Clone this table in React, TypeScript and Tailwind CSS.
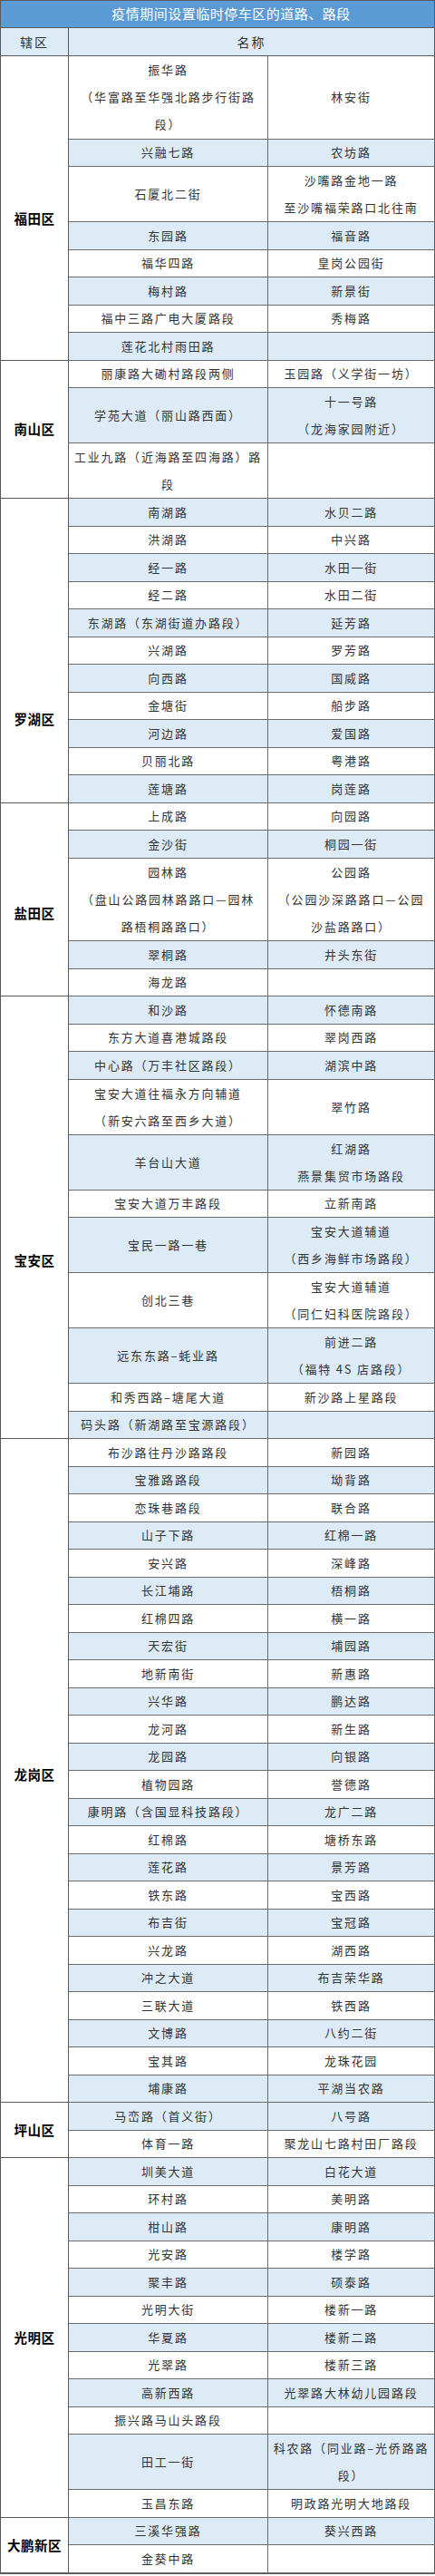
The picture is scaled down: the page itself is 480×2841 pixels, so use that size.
import React from 'react';

type Row = { u: 1 | 2 | 3; a: string[]; b: string[] };
type District = { name: string; shift: string; blueFirst: boolean; rows: Row[] };

const r = (a: string | string[], b: string | string[] = '', u: 1 | 2 | 3 = 1): Row => ({
    u,
    a: Array.isArray(a) ? a : [a],
    b: Array.isArray(b) ? b : [b],
});

const districts: District[] = [
    {
        name: '福田区', shift: 'pt-[24px]', blueFirst: false, rows: [
            r(['振华路', '（华富路至华强北路步行街路', '段）'], '林安街', 3),
            r('兴融七路', '农坊路'),
            r('石厦北二街', ['沙嘴路金地一路', '至沙嘴福荣路口北往南'], 2),
            r('东园路', '福音路'),
            r('福华四路', '皇岗公园街'),
            r('梅村路', '新景街'),
            r('福中三路广电大厦路段', '秀梅路'),
            r('莲花北村雨田路'),
        ]
    },
    {
        name: '南山区', shift: '', blueFirst: false, rows: [
            r('丽康路大磡村路段两侧', '玉园路（义学街一坊）'),
            r('学苑大道（丽山路西面）', ['十一号路', '（龙海家园附近）'], 2),
            r(['工业九路（近海路至四海路）路', '段'], '', 2),
        ]
    },
    {
        name: '罗湖区', shift: 'pt-[152px]', blueFirst: true, rows: [
            r('南湖路', '水贝二路'),
            r('洪湖路', '中兴路'),
            r('经一路', '水田一街'),
            r('经二路', '水田二街'),
            r('东湖路（东湖街道办路段）', '延芳路'),
            r('兴湖路', '罗芳路'),
            r('向西路', '国威路'),
            r('金塘街', '船步路'),
            r('河边路', '爱国路'),
            r('贝丽北路', '粤港路'),
            r('莲塘路', '岗莲路'),
        ]
    },
    {
        name: '盐田区', shift: 'pt-[30px]', blueFirst: false, rows: [
            r('上成路', '向园路'),
            r('金沙街', '桐园一街'),
            r(['园林路', '（盘山公路园林路路口—园林', '路梧桐路路口）'], ['公园路', '（公园沙深路路口—公园', '沙盐路路口）'], 3),
            r('翠桐路', '井头东街'),
            r('海龙路'),
        ]
    },
    {
        name: '宝安区', shift: 'pt-[94px]', blueFirst: true, rows: [
            r('和沙路', '怀德南路'),
            r('东方大道喜港城路段', '翠岗西路'),
            r('中心路（万丰社区路段）', '湖滨中路'),
            r(['宝安大道往福永方向辅道', '（新安六路至西乡大道）'], '翠竹路', 2),
            r('羊台山大道', ['红湖路', '燕景集贸市场路段'], 2),
            r('宝安大道万丰路段', '立新南路'),
            r('宝民一路一巷', ['宝安大道辅道', '（西乡海鲜市场路段）'], 2),
            r('创北三巷', ['宝安大道辅道', '（同仁妇科医院路段）'], 2),
            r('远东东路–蚝业路', ['前进二路', '（福特 4S 店路段）'], 2),
            r('和秀西路–塘尾大道', '新沙路上星路段'),
            r('码头路（新湖路至宝源路段）'),
        ]
    },
    {
        name: '龙岗区', shift: 'pt-[8px]', blueFirst: false, rows: [
            r('布沙路往丹沙路路段', '新园路'),
            r('宝雅路路段', '坳背路'),
            r('恋珠巷路段', '联合路'),
            r('山子下路', '红棉一路'),
            r('安兴路', '深峰路'),
            r('长江埔路', '梧桐路'),
            r('红棉四路', '横一路'),
            r('天宏街', '埔园路'),
            r('地新南街', '新惠路'),
            r('兴华路', '鹏达路'),
            r('龙河路', '新生路'),
            r('龙园路', '向银路'),
            r('植物园路', '誉德路'),
            r('康明路（含国显科技路段）', '龙广二路'),
            r('红棉路', '塘桥东路'),
            r('莲花路', '景芳路'),
            r('铁东路', '宝西路'),
            r('布吉街', '宝冠路'),
            r('兴龙路', '湖西路'),
            r('冲之大道', '布吉荣华路'),
            r('三联大道', '铁西路'),
            r('文博路', '八约二街'),
            r('宝其路', '龙珠花园'),
            r('埔康路', '平湖当农路'),
        ]
    },
    {
        name: '坪山区', shift: '', blueFirst: true, rows: [
            r('马峦路（首义街）', '八号路'),
            r('体育一路', '聚龙山七路村田厂路段'),
        ]
    },
    {
        name: '光明区', shift: '', blueFirst: true, rows: [
            r('圳美大道', '白花大道'),
            r('环村路', '美明路'),
            r('柑山路', '康明路'),
            r('光安路', '楼学路'),
            r('聚丰路', '硕泰路'),
            r('光明大街', '楼新一路'),
            r('华夏路', '楼新二路'),
            r('光翠路', '楼新三路'),
            r('高新西路', '光翠路大林幼儿园路段'),
            r('振兴路马山头路段'),
            r('田工一街', ['科农路（同业路–光侨路路', '段）'], 2),
            r('玉昌东路', '明政路光明大地路段'),
        ]
    },
    {
        name: '大鹏新区', shift: '', blueFirst: true, rows: [
            r('三溪华强路', '葵兴西路'),
            r('金葵中路'),
        ]
    },
];

const heights = { 1: 'h-[30.5px]', 2: 'h-[61px]', 3: 'h-[91.5px]' };

const Cell = ({ lines, className = '' }: { lines: string[]; className?: string }) => (
    <div className={`flex flex-col items-center justify-center whitespace-nowrap overflow-hidden ${className}`}>
        {lines.map((l, i) => (
            <span key={i} className="block leading-[30px] tracking-[1.8px]">{l}</span>
        ))}
    </div>
);

export default function App() {
    return (
        <div className="w-[480px] bg-white text-[#333] text-[13px]" style={{ fontFamily: '"Noto Sans CJK SC", "Noto Sans", sans-serif' }}>
            <div className="border border-[#5a5a5a]">
                {/* Title */}
                <div className="h-[30px] bg-[#5b9bd5] text-white text-[15px] tracking-[0.5px] flex items-center justify-center pl-[30px] border-b border-[#5a5a5a]">
                    疫情期间设置临时停车区的道路、路段
                </div>

                {/* Header */}
                <div className="h-[31px] flex bg-[#ddebf7] text-[14px] tracking-[2px] border-b border-[#5a5a5a]">
                    <div className="w-[75px] shrink-0 border-r border-[#5a5a5a] flex items-center justify-center">辖区</div>
                    <div className="flex-1 flex items-center justify-center">名称</div>
                </div>

                {/* Body */}
                {districts.map((d) => (
                    <div key={d.name} className="flex">
                        <div className={`w-[75px] shrink-0 border-r border-b border-[#5a5a5a] flex items-center justify-center font-bold text-[14.5px] text-black tracking-[0.5px] ${d.shift}`}>
                            {d.name}
                        </div>
                        <div className="flex-1 flex flex-col">
                            {d.rows.map((row, i) => {
                                const blue = (i % 2 === 0) === d.blueFirst;
                                return (
                                    <div key={i} className={`flex border-b border-[#6b6b6b] ${heights[row.u]} ${blue ? 'bg-[#ddebf7]' : 'bg-white'}`}>
                                        <Cell lines={row.a} className="w-[220px] shrink-0 border-r border-[#6b6b6b]" />
                                        <Cell lines={row.b} className="flex-1" />
                                    </div>
                                );
                            })}
                        </div>
                    </div>
                ))}
            </div>
        </div>
    );
}
